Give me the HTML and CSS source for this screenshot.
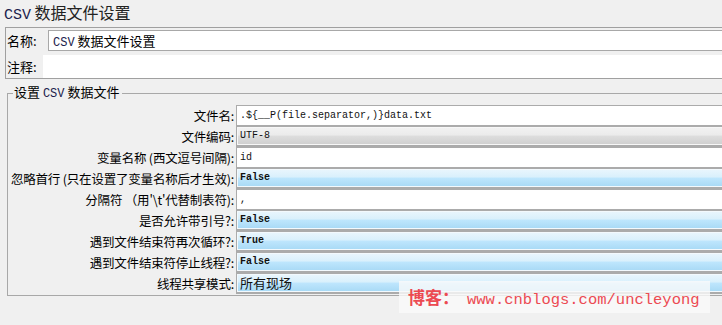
FILE: index.html
```html
<!DOCTYPE html>
<html lang="zh-CN">
<head>
<meta charset="UTF-8">
<title>CSV 数据文件设置</title>
<link rel="stylesheet" href="styles.css">
</head>
<body>
  <div class="page">
    <h1 class="title"><span class="latin">CSV</span> 数据文件设置</h1>

    <div class="namepanel">
      <div class="namerow">
        <label class="lbl">名称:</label>
        <div class="textbox"><span class="latin">CSV</span> 数据文件设置</div>
      </div>
      <div class="commentrow">
        <label class="lbl">注释:</label>
        <div class="commentbox"></div>
      </div>
    </div>

    <fieldset class="group">
      <legend>设置 <span class="latin">CSV</span> 数据文件</legend>
      <div class="form">
        <label class="flabel"><span>文件名:</span></label>
        <div class="field text">.${__P(file.separator,)}data.txt</div>

        <label class="flabel"><span>文件编码:</span></label>
        <div class="field combo grey">UTF-8</div>

        <label class="flabel"><span>变量名称 (西文逗号间隔):</span></label>
        <div class="field text">id</div>

        <label class="flabel"><span>忽略首行 (只在设置了变量名称后才生效):</span></label>
        <div class="field combo">False</div>

        <label class="flabel"><span>分隔符 （用'\t'代替制表符):</span></label>
        <div class="field text">,</div>

        <label class="flabel"><span>是否允许带引号?:</span></label>
        <div class="field combo">False</div>

        <label class="flabel"><span>遇到文件结束符再次循环?:</span></label>
        <div class="field combo">True</div>

        <label class="flabel"><span>遇到文件结束符停止线程?:</span></label>
        <div class="field combo">False</div>

        <label class="flabel"><span>线程共享模式:</span></label>
        <div class="field combo cjk">所有现场</div>
      </div>
    </fieldset>
  </div>

  <div class="watermark">博客：<span class="url">www.cnblogs.com/uncleyong</span></div>
</body>
</html>
```

FILE: styles.css
```css
*{
    box-sizing: border-box;
}
body{
    margin: 0;
    width: 722px;
    height: 325px;
    overflow: hidden;
    position: relative;
    background-color: #f0f0f0;
    font-family: "Noto Sans CJK SC", "Noto Sans", sans-serif;
    color: #000;
}
.page{
    width: 740px;
}
.latin{
    font-family: "Liberation Mono", monospace;
    color: #1c1c4c;
}

/* titre */
.title{
    margin: 0;
    height: 27px;
    padding: 1px 0 0 4px;
    font-size: 16px;
    font-weight: normal;
    line-height: 22px;
    color: #222;
}
.title .latin{
    font-size: 15px;
}

/* nom + commentaire */
.namepanel{
    margin-left: 5px;
    border: 1px solid #a0a0a0;
    height: 52px;
}
.namerow{
    display: flex;
    align-items: center;
    height: 24px;
    padding-top: 1px;
}
.lbl{
    font-size: 13px;
    padding-left: 1px;
    line-height: 20px;
}
.namerow .lbl{
    width: 42px;
}
.textbox{
    flex: 1;
    height: 21px;
    border: 1px solid #a8a8a8;
    background: #fff;
    padding-left: 4px;
    font-size: 13px;
    line-height: 19px;
}
.textbox .latin{
    font-size: 12px;
}
.commentrow{
    display: flex;
    align-items: stretch;
    height: 26px;
    padding-top: 3px;
}
.commentrow .lbl{
    width: 37px;
    line-height: 24px;
}
.commentbox{
    flex: 1;
    background: #fff;
}

/* groupe */
.group{
    margin: 5px 0 0 7px;
    padding: 0;
    border: 1px solid #a8a8a8;
    height: 212px;
}
.group legend{
    margin-left: 5px;
    padding: 0 3px 0 1px;
    font-size: 13px;
    line-height: 15px;
}
.group legend .latin{
    font-size: 12px;
}
.form{
    display: grid;
    grid-template-columns: 228px 1fr;
    grid-auto-rows: 21px;
    padding-top: 3px;
}
.flabel{
    display: flex;
    justify-content: flex-end;
    font-size: 12.5px;
    line-height: 21px;
    padding-right: 2px;
    white-space: nowrap;
    letter-spacing: -0.2px;
}
.field{
    height: 21px;
    border: 1px solid #ababab;
    border-bottom: 2px solid #ababab;
    padding-left: 3px;
    font-family: "Liberation Mono", monospace;
    font-size: 10px;
    line-height: 18px;
    color: #111;
}
.text{
    background: #fff;
    border-color: #ababab;
    border-bottom-width: 1px;
    font-size: 10px;
    line-height: 19px;
}
.combo{
    font-weight: bold;
    background: linear-gradient(#eaf6fd 0, #d9f0fc 45%, #bee6fd 50%, #a7d9f5 100%);
    box-shadow: inset 0 0 0 1px #f3f9fd;
}
.grey{
    font-weight: normal;
    background: linear-gradient(#f2f2f2 0, #ebebeb 45%, #dddddd 50%, #cfcfcf 100%);
    box-shadow: inset 0 0 0 1px #f7f7f7;
}
.cjk{
    font-family: "Noto Sans CJK SC", sans-serif;
    font-weight: normal;
    font-size: 13px;
}

/* filigrane */
.watermark{
    position: absolute;
    left: 399px;
    top: 281px;
    width: 311px;
    height: 32px;
    padding-left: 9px;
    background: rgba(250, 250, 250, 0.8);
    color: #ec4a52;
    font-family: "Noto Sans CJK SC", serif;
    font-size: 17px;
    font-weight: bold;
    line-height: 32px;
    white-space: nowrap;
}
.watermark .url{
    margin-left: 8px;
    font-family: "Liberation Mono", monospace;
    font-size: 15.5px;
    font-weight: normal;
}
```
